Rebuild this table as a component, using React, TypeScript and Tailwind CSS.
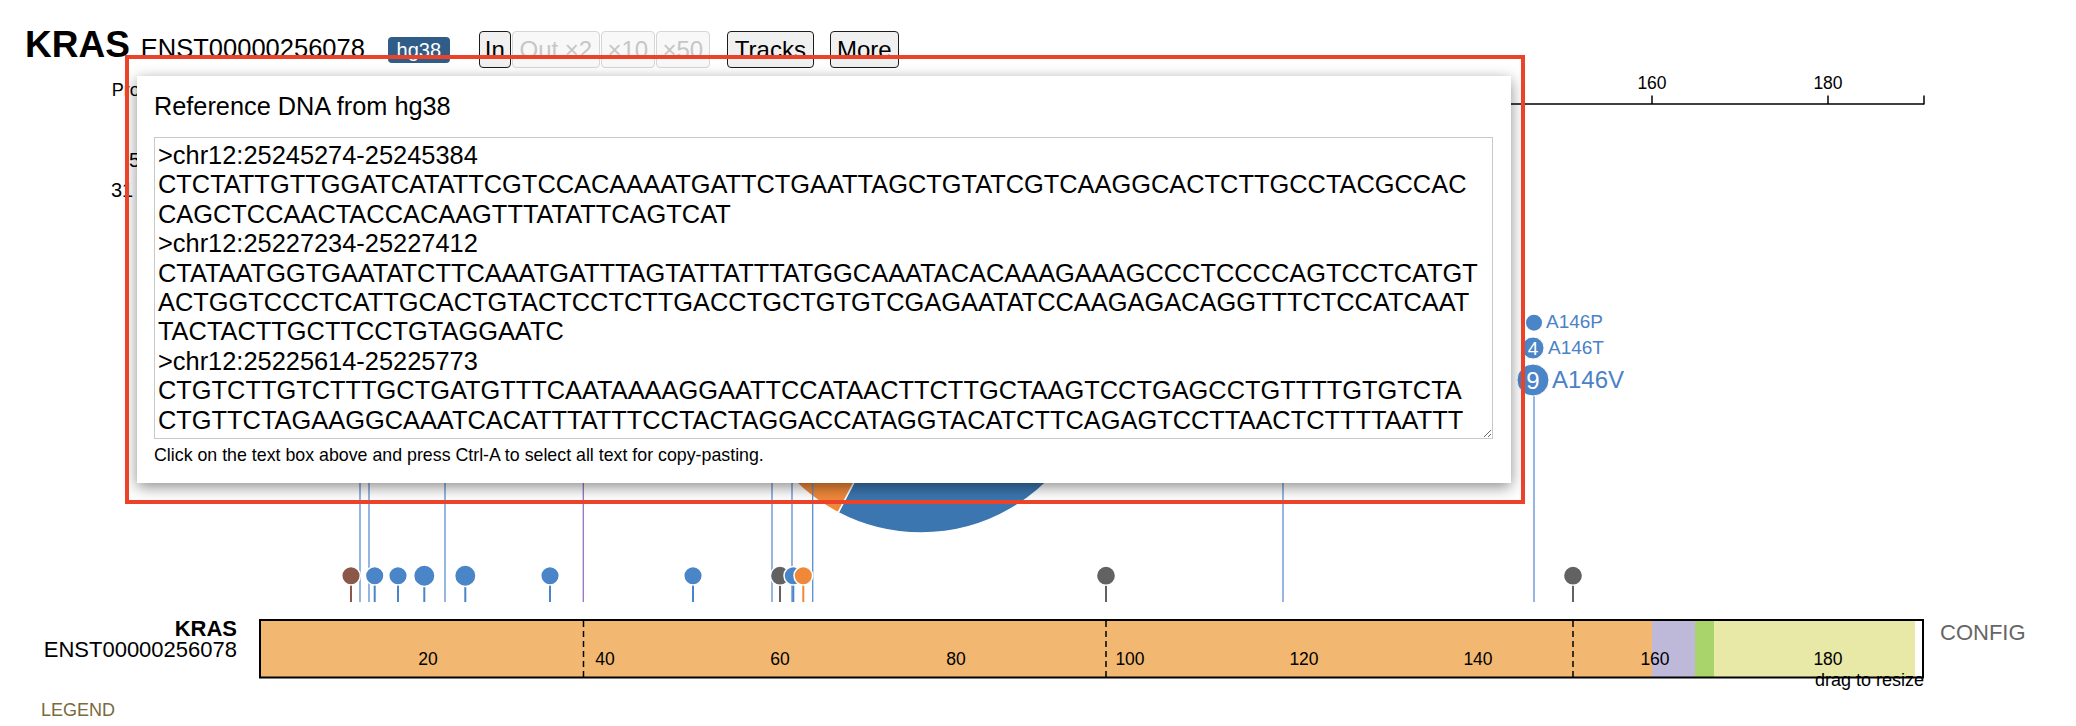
import React from 'react'

const BLUE = '#4a85c7'
const LINE_BLUE = '#5a8ed0'
const GRAY = '#626262'
const BROWN = '#8a5748'
const ORANGE = '#f0883a'

// x position of an amino acid on the ruler
const ax = (aa: number) => 1652 + (aa - 160) * 8.8

const dna = [
  '>chr12:25245274-25245384',
  'CTCTATTGTTGGATCATATTCGTCCACAAAATGATTCTGAATTAGCTGTATCGTCAAGGCACTCTTGCCTACGCCAC',
  'CAGCTCCAACTACCACAAGTTTATATTCAGTCAT',
  '>chr12:25227234-25227412',
  'CTATAATGGTGAATATCTTCAAATGATTTAGTATTATTTATGGCAAATACACAAAGAAAGCCCTCCCCAGTCCTCATGT',
  'ACTGGTCCCTCATTGCACTGTACTCCTCTTGACCTGCTGTGTCGAGAATATCCAAGAGACAGGTTTCTCCATCAAT',
  'TACTACTTGCTTCCTGTAGGAATC',
  '>chr12:25225614-25225773',
  'CTGTCTTGTCTTTGCTGATGTTTCAATAAAAGGAATTCCATAACTTCTTGCTAAGTCCTGAGCCTGTTTTGTGTCTA',
  'CTGTTCTAGAAGGCAAATCACATTTATTTCCTACTAGGACCATAGGTACATCTTCAGAGTCCTTAACTCTTTTAATTT',
].join('\n')

const dots = [
  { x: 351, r: 9.3, c: BROWN },
  { x: 374.7, r: 9.3, c: BLUE },
  { x: 398, r: 9.3, c: BLUE },
  { x: 424.3, r: 10.7, c: BLUE },
  { x: 465.3, r: 10.7, c: BLUE },
  { x: 550, r: 9.3, c: BLUE },
  { x: 693, r: 9.3, c: BLUE },
  { x: 780, r: 9.6, c: GRAY },
  { x: 793.3, r: 9.3, c: BLUE },
  { x: 803.3, r: 9.3, c: ORANGE },
  { x: 1106, r: 9.6, c: GRAY },
  { x: 1573, r: 9.6, c: GRAY },
]

const longLines = [360, 369, 445, 772, 792, 812.7, 1283]

function slice(cx: number, cy: number, r: number, a0: number, a1: number) {
  const p = (a: number) => {
    const t = (a * Math.PI) / 180
    return `${cx + r * Math.cos(t)} ${cy + r * Math.sin(t)}`
  }
  const large = a1 - a0 > 180 ? 1 : 0
  return `M ${cx} ${cy} L ${p(a0)} A ${r} ${r} 0 ${large} 1 ${p(a1)} Z`
}

function Btn({ label, w, off, ml }: { label: string; w: string; off?: boolean; ml: string }) {
  return (
    <button
      className={
        off
          ? `${w} ${ml} mt-[5px] h-[37px] flex items-center justify-center rounded-[4px] border border-[#d6d6d6] bg-[#f8f8f8] text-[24px] leading-none text-[#c6c6c6]`
          : `${w} ${ml} mt-[5px] h-[37px] flex items-center justify-center rounded-[4px] border border-[#1c1c1c] bg-[#f0f0f0] text-[24px] leading-none text-black`
      }
    >
      {label}
    </button>
  )
}

function Header() {
  return (
    <div className="flex h-[70px] items-start pl-[25px] pt-[26px]">
      <div className="flex items-baseline">
        <span className="text-[37px] font-bold leading-none">KRAS</span>
        <span className="ml-[11px] text-[25.5px] leading-none">ENST00000256078</span>
      </div>
      <span className="ml-[23px] mt-[11px] flex h-[26px] w-[62px] items-center justify-center rounded-[4px] bg-[#2f5d87] text-[20px] leading-none text-white">
        hg38
      </span>
      <Btn label="In" w="w-[32px]" ml="ml-[29px]" />
      <Btn label="Out ×2" w="w-[88px]" ml="ml-[1px]" off />
      <Btn label="×10" w="w-[54px]" ml="ml-[1px]" off />
      <Btn label="×50" w="w-[54px]" ml="ml-[1px]" off />
      <Btn label="Tracks" w="w-[87px]" ml="ml-[17px]" />
      <Btn label="More" w="w-[69px]" ml="ml-[16px]" />
    </div>
  )
}

function Chart() {
  const ticks = [20, 40, 60, 80, 100, 120, 140, 160, 180]
  return (
    <svg width={2076} height={534} viewBox="0 70 2076 534" className="block">
      <text x={111.7} y={95.7} fontSize={18}>Protein length</text>
      <text x={129} y={167} fontSize={20}>5</text>
      <text x={111} y={197} fontSize={20}>31</text>

      {/* ruler */}
      <line x1={244} y1={104} x2={1924} y2={104} stroke="#000" strokeWidth={1.5} />
      <line x1={1924} y1={95.5} x2={1924} y2={104.5} stroke="#000" strokeWidth={1.5} />
      {ticks.map((t) => (
        <g key={t}>
          <line x1={ax(t)} y1={95.5} x2={ax(t)} y2={104} stroke="#000" strokeWidth={1.5} />
          <text x={ax(t)} y={89} fontSize={17.5} textAnchor="middle">{t}</text>
        </g>
      ))}

      {/* pie */}
      <g stroke="#fff" strokeWidth={1.5}>
        <path d={slice(921, 354, 179, -120, 117.6)} fill="#3b76b0" />
        <path d={slice(921, 354, 179, 117.6, 170)} fill={ORANGE} />
        <path d={slice(921, 354, 179, 170, 200)} fill={GRAY} />
        <path d={slice(921, 354, 179, 200, 240)} fill={BROWN} />
      </g>

      {longLines.map((x) => (
        <line key={x} x1={x} y1={250} x2={x} y2={602} stroke={LINE_BLUE} strokeWidth={1.3} />
      ))}
      <line x1={583.3} y1={250} x2={583.3} y2={602} stroke="#9b6fc4" strokeWidth={1.3} />
      <line x1={1534} y1={396} x2={1534} y2={602} stroke={LINE_BLUE} strokeWidth={1.3} />

      {/* lollipops on the line */}
      {dots.map((d) => (
        <g key={d.x}>
          <line x1={d.x} y1={585} x2={d.x} y2={602} stroke={d.c} strokeWidth={2} />
          <circle cx={d.x} cy={575.7} r={d.r} fill={d.c} stroke="#fff" strokeWidth={1.5} />
        </g>
      ))}

      {/* stacked lollipops at A146 */}
      <g fill={BLUE}>
        <circle cx={1534} cy={322.7} r={8} />
        <circle cx={1533} cy={348} r={11} stroke="#fff" strokeWidth={1} />
        <circle cx={1533} cy={380} r={16} stroke="#fff" strokeWidth={1} />
      </g>
      <text x={1533} y={354.5} fontSize={19} fill="#fff" textAnchor="middle">4</text>
      <text x={1533} y={388.5} fontSize={24} fill="#fff" textAnchor="middle">9</text>
      <g fill="#4b82c6">
        <text x={1546} y={328} fontSize={19}>A146P</text>
        <text x={1548} y={353.5} fontSize={19}>A146T</text>
        <text x={1552} y={387.5} fontSize={24}>A146V</text>
      </g>
    </svg>
  )
}

function ProteinBar() {
  const labels: [number, string][] = [
    [169, '20'], [346, '40'], [521, '60'], [697, '80'], [871, '100'],
    [1045, '120'], [1219, '140'], [1396, '160'], [1569, '180'],
  ]
  return (
    <div className="relative ml-[22px]">
      <svg width={1665} height={60} className="block">
        <rect x={1} y={1} width={1663} height={57.5} fill="#f2b872" />
        <rect x={1393} y={1} width={43} height={57.5} fill="#bfb9d9" />
        <rect x={1436} y={1} width={19} height={57.5} fill="#a8d46b" />
        <rect x={1455} y={1} width={201} height={57.5} fill="#e8e8a7" />
        <rect x={1656} y={1} width={8} height={57.5} fill="#fff" />
        {[324.5, 847, 1314].map((x) => (
          <line key={x} x1={x} y1={2} x2={x} y2={58} stroke="#000" strokeWidth={1.5} strokeDasharray="6 4" />
        ))}
        {labels.map(([x, t]) => (
          <text key={t} x={x} y={46} fontSize={17.5} textAnchor="middle">{t}</text>
        ))}
        <rect x={1} y={1} width={1663} height={57.5} fill="none" stroke="#000" strokeWidth={2} />
      </svg>
      <span className="absolute right-0 top-[51px] text-[18px] leading-[20.7px] text-black">drag to resize</span>
    </div>
  )
}

function DnaDialog() {
  return (
    <div className="absolute left-[137px] top-[76px] h-[407px] w-[1374px] bg-white pl-[17px] pt-[16px] shadow-[0_4px_14px_rgba(0,0,0,0.45)]">
      <div className="text-[25.3px] leading-[29px] text-black">Reference DNA from hg38</div>
      <textarea
        readOnly
        value={dna}
        className="mt-[16px] block h-[302px] w-[1339px] overflow-hidden whitespace-pre border border-[#c9c9c9] p-[3px] font-['Liberation_Sans',Arial,sans-serif] text-[25.4px] leading-[29.4px] text-black outline-none"
      />
      <div className="mt-[6px] text-[17.8px] leading-[20.5px] text-black">
        Click on the text box above and press Ctrl-A to select all text for copy-pasting.
      </div>
    </div>
  )
}

export default function App() {
  return (
    <div className="relative h-[726px] w-[2076px] overflow-hidden bg-white font-['Liberation_Sans',Arial,sans-serif] text-black">
      <Header />
      <Chart />
      <div className="flex items-start pt-[15px]">
        <div className="w-[237px] text-right text-[22px] leading-[20.7px]">
          <div className="font-bold">KRAS</div>
          <div>ENST00000256078</div>
        </div>
        <ProteinBar />
        <span className="ml-[16px] mt-[1px] text-[22px] leading-[25.3px] text-[#666]">CONFIG</span>
      </div>
      <div className="ml-[41px] mt-[21px] text-[18px] leading-[20.7px] text-[#7a6a3d]">LEGEND</div>

      <DnaDialog />
      {/* highlight box */}
      <div className="pointer-events-none absolute left-[125px] top-[55px] h-[449px] w-[1400px] border-4 border-[#eb4329]" />
    </div>
  )
}
